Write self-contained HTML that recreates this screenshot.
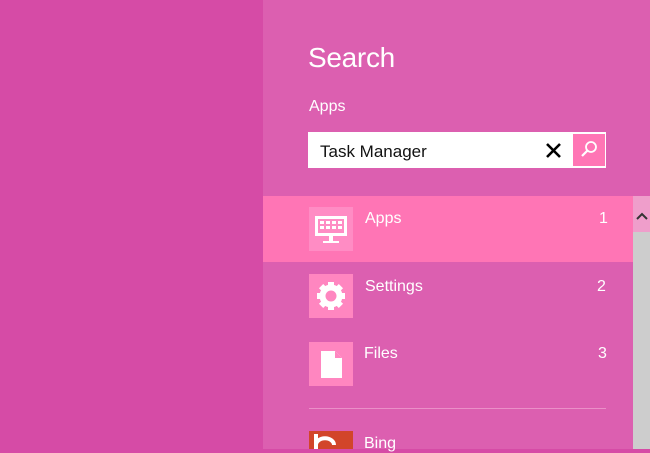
<html><head><style>
body{margin:0;width:650px;height:449px;overflow:hidden;background:#d64ba6;font-family:"Liberation Sans",sans-serif;position:relative}
.p{position:absolute;left:263px;top:0;width:387px;height:449px;background:#dc5fb0}
.a{position:absolute;color:#fff}
.tile{position:absolute;left:309px;width:44px;height:44px;background:#ff86c0}
</style></head><body>
<div class="p"></div>
<div class="a" style="left:308px;top:42px;font-size:28px;letter-spacing:-0.3px">Search</div>
<div class="a" style="left:309px;top:98px;font-size:16px">Apps</div>
<div style="position:absolute;left:308px;top:132px;width:298px;height:36px;background:#fff"></div>
<div style="position:absolute;left:320px;top:142px;font-size:17px;color:#111">Task Manager</div>
<svg style="position:absolute;left:545px;top:142px" width="17" height="17"><path d="M2 2L15 15M15 2L2 15" stroke="#000" stroke-width="2.6"/></svg>
<div style="position:absolute;left:573px;top:134px;width:32px;height:32px;background:#ff75b5"></div>
<svg style="position:absolute;left:578px;top:139px" width="22" height="22"><circle cx="13" cy="8" r="5" fill="none" stroke="#fff" stroke-width="1.8"/><path d="M9.5 11.5L4 17" stroke="#fff" stroke-width="2.2"/></svg>
<div style="position:absolute;left:263px;top:196px;width:370px;height:66px;background:#ff75b5"></div>
<div style="position:absolute;left:633px;top:196px;width:17px;height:253px;background:#cdcdcd"></div>
<div style="position:absolute;left:633px;top:196px;width:17px;height:36px;background:#ef9ecb"></div>
<svg style="position:absolute;left:634px;top:210px" width="16" height="12"><path d="M3 9L8 4L13 9" fill="none" stroke="#333" stroke-width="2"/></svg>
<div class="tile" style="top:207px;background:#ff8cc4"></div>
<svg style="position:absolute;left:309px;top:207px" width="44" height="44"><rect x="6" y="9" width="32" height="20" fill="#fff"/><g fill="#ff8cc4"><rect x="9" y="12" width="26" height="14"/></g><g fill="#fff"><rect x="11" y="14" width="4" height="3"/><rect x="17" y="14" width="4" height="3"/><rect x="23" y="14" width="4" height="3"/><rect x="29" y="14" width="4" height="3"/><rect x="11" y="19" width="4" height="3"/><rect x="17" y="19" width="4" height="3"/><rect x="23" y="19" width="4" height="3"/><rect x="29" y="19" width="4" height="3"/><rect x="20" y="29" width="4" height="5"/><rect x="14" y="34" width="16" height="2"/></g></svg>
<div class="a" style="left:365px;top:210px;font-size:16px">Apps</div>
<div class="a" style="left:599px;top:210px;font-size:16px">1</div>
<div class="tile" style="top:274px"></div>
<svg style="position:absolute;left:309px;top:274px" width="44" height="44"><g transform="translate(22 22)" fill="#fff"><circle r="11.5"/><g><rect x="-3" y="-14" width="6" height="28"/><rect x="-3" y="-14" width="6" height="28" transform="rotate(45)"/><rect x="-3" y="-14" width="6" height="28" transform="rotate(90)"/><rect x="-3" y="-14" width="6" height="28" transform="rotate(135)"/></g><circle r="5.5" fill="#ff86c0"/></g></svg>
<div class="a" style="left:365px;top:278px;font-size:16px">Settings</div>
<div class="a" style="left:597px;top:278px;font-size:16px">2</div>
<div class="tile" style="top:342px"></div>
<svg style="position:absolute;left:309px;top:342px" width="44" height="44"><path d="M12 9H26L33 16V36H12Z" fill="#fff"/><path d="M26 9V16H33" fill="#ff86c0"/></svg>
<div class="a" style="left:364px;top:345px;font-size:16px">Files</div>
<div class="a" style="left:598px;top:345px;font-size:16px">3</div>
<div style="position:absolute;left:309px;top:408px;width:297px;height:1px;background:#eb8fc8"></div>
<div style="position:absolute;left:309px;top:431px;width:44px;height:18px;background:#d2452a"></div>
<svg style="position:absolute;left:309px;top:431px" width="44" height="18"><path d="M7 18V3M7 14A8 6 0 0 1 25 14" fill="none" stroke="#fff" stroke-width="4"/></svg>
<div class="a" style="left:364px;top:435px;font-size:16px">Bing</div>
</body></html>
